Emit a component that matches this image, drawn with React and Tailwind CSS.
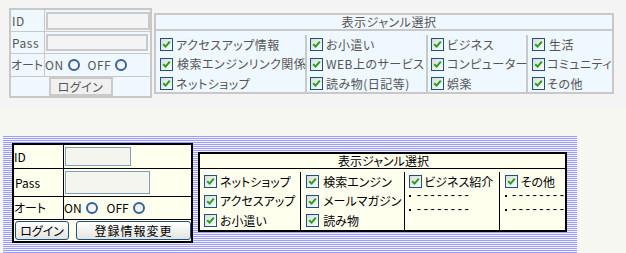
import React from "react";

const Check = () => (
  <span className="inline-flex shrink-0 w-[13px] h-[13px] border border-[#1c5180] bg-linear-to-br from-[#dcdcd6] to-[#fbfbfb] items-center justify-center">
    <svg width="9" height="9" viewBox="0 0 9 9">
      <path d="M1.2 4.2 L3.6 6.6 L7.8 1.6" stroke="#21a121" strokeWidth="2" fill="none" />
    </svg>
  </span>
);

const Radio = () => (
  <span className="inline-block shrink-0 w-[12px] h-[12px] rounded-full border-2 border-[#33639a] bg-linear-to-br from-[#e8e8e4] to-white" />
);

const Item = ({ label, gap = "gap-[3px]" }) => (
  <div className={`flex items-center ${gap} h-[19.5px] whitespace-nowrap`}>
    <Check />
    <span>{label}</span>
  </div>
);

const Dash = () => (
  <div className="flex items-center h-[14px] whitespace-nowrap tracking-normal">
    <span className="w-[2px] h-[2px] bg-black mr-[4px]" />
    <span className="font-['Liberation_Mono',monospace] text-[12px] leading-[14px] tracking-[-0.4px]">--------</span>
  </div>
);

export default function App() {
  return (
    <div className="w-[626px] h-[253px] overflow-hidden bg-[#f7f7f2] font-['Noto_Sans_CJK_JP','Noto_Sans',sans-serif] [font-feature-settings:'palt'] text-[12px] leading-[14px]">
      {/* top section */}
      <div className="h-[108px] bg-[#f4f4f4] flex items-start pl-[9px] pt-[8px] text-[#555] tracking-[0.5px]">
        {/* login table */}
        <div className="w-[143px] h-[90px] border-2 border-[#c8c8c8] bg-[#eff7ff] flex flex-col">
          <div className="h-[22px] flex border-b border-[#c8c8c8]">
            <div className="w-[34px] border-r border-[#c8c8c8] flex items-center pl-[1px] whitespace-nowrap">ID</div>
            <div className="flex-1 flex items-center pl-[1px]">
              <div className="w-[104px] h-[18px] border-2 border-[#cacaca] bg-[#f4f4f4]" />
            </div>
          </div>
          <div className="h-[22px] flex border-b border-[#c8c8c8]">
            <div className="w-[34px] border-r border-[#c8c8c8] flex items-center pl-[1px] whitespace-nowrap">Pass</div>
            <div className="flex-1 flex items-center pl-[1px]">
              <div className="w-[102px] h-[17px] border-2 border-[#cacaca] bg-[#f4f4f4]" />
            </div>
          </div>
          <div className="h-[23px] flex border-b border-[#c8c8c8]">
            <div className="w-[34px] shrink-0 border-r border-[#c8c8c8] flex items-center whitespace-nowrap tracking-normal">オート</div>
            <div className="flex-1 flex items-center gap-[4px] whitespace-nowrap">
              <span>ON</span>
              <Radio />
              <span className="ml-[4px]">OFF</span>
              <Radio />
            </div>
          </div>
          <div className="flex-1 flex items-center justify-center">
            <div className="w-[64px] h-[19px] border-2 border-[#cacaca] bg-[#f0f0f0] flex items-center justify-center whitespace-nowrap">ログイン</div>
          </div>
        </div>

        {/* genre table */}
        <div className="ml-[2px] mt-[5px] w-[460px] h-[81px] border-2 border-[#c8c8c8] bg-[#eff7ff] flex flex-col">
          <div className="h-[16px] border-b-2 border-[#c8c8c8] flex items-center justify-center pl-[10px]">表示ジャンル選択</div>
          <div className="flex-1 flex pt-[4px]">
            <div className="w-[151px] border-r-2 border-[#c8c8c8] pl-[4px] flex flex-col">
              <Item label="アクセスアップ情報" />
              <Item label="検索エンジンリンク関係" gap="gap-[4px]" />
              <Item label="ネットショップ" />
            </div>
            <div className="w-[123px] border-r-2 border-[#c8c8c8] pl-[3px] flex flex-col">
              <Item label="お小遣い" />
              <Item label="WEB上のサービス" />
              <Item label="読み物(日記等)" />
            </div>
            <div className="w-[100px] border-r-2 border-[#c8c8c8] pl-[3px] flex flex-col">
              <Item label="ビジネス" />
              <Item label="コンピューター" />
              <Item label="娯楽" />
            </div>
            <div className="flex-1 pl-[4px] flex flex-col">
              <Item label="生活" gap="gap-[4px]" />
              <Item label="コミュニティ" gap="gap-[2px]" />
              <Item label="その他" gap="gap-[2px]" />
            </div>
          </div>
        </div>
      </div>

      {/* bottom section */}
      <div className="pt-[28px] pl-[3px]">
        <div className="w-[574px] h-[117px] bg-[repeating-linear-gradient(to_bottom,#9d9dff_0px,#9d9dff_1px,#f2f2ff_1px,#f2f2ff_2px)] flex items-start pl-[9px] pt-[7px] text-black">
          {/* login table */}
          <div className="w-[181px] h-[100px] border-2 border-black bg-[#ffffee] flex flex-col">
            <div className="h-[24px] flex border-b border-black">
              <div className="w-[50px] border-r border-black flex items-center whitespace-nowrap">ID</div>
              <div className="flex-1 flex items-center pl-[1px]">
                <div className="w-[66px] h-[19px] border border-[#7f9db9] bg-[#f5f5f0]" />
              </div>
            </div>
            <div className="h-[28px] flex border-b border-black">
              <div className="w-[50px] border-r border-black flex items-center pl-[1px] whitespace-nowrap">Pass</div>
              <div className="flex-1 flex items-center pl-[1px]">
                <div className="w-[85px] h-[23px] border border-[#7f9db9] bg-[#f5f5f0]" />
              </div>
            </div>
            <div className="h-[23px] flex border-b border-black">
              <div className="w-[50px] border-r border-black flex items-center whitespace-nowrap">オート</div>
              <div className="flex-1 flex items-center gap-[4px] whitespace-nowrap">
                <span>ON</span>
                <Radio />
                <span className="ml-[5px]">OFF</span>
                <Radio />
              </div>
            </div>
            <div className="flex-1 flex items-center pl-[1px] gap-[7px]">
              <div className="w-[54px] h-[19px] rounded-[3px] border border-[#1c5180] bg-linear-to-b from-white to-[#e4e4de] flex items-center justify-center whitespace-nowrap">ログイン</div>
              <div className="w-[115px] h-[19px] rounded-[3px] border border-[#1c5180] bg-linear-to-b from-white to-[#e4e4de] flex items-center justify-center whitespace-nowrap tracking-[1px]">登録情報変更</div>
            </div>
          </div>

          {/* genre table */}
          <div className="ml-[5px] mt-[9px] w-[369px] h-[80px] border-2 border-black bg-[#ffffee] flex flex-col">
            <div className="h-[16px] border-b border-black flex items-center justify-center pl-[2px]">表示ジャンル選択</div>
            <div className="flex-1 flex pt-[3px]">
              <div className="w-[102px] border-r border-black pl-[4px] flex flex-col">
                <Item label="ネットショップ" gap="gap-[3px]" />
                <Item label="アクセスアップ" gap="gap-[3px]" />
                <Item label="お小遣い" gap="gap-[3px]" />
              </div>
              <div className="w-[105px] border-r border-black pl-[5px] flex flex-col">
                <Item label="検索エンジン" gap="gap-[4px]" />
                <Item label="メールマガジン" gap="gap-[4px]" />
                <Item label="読み物" gap="gap-[4px]" />
              </div>
              <div className="w-[95px] border-r border-black pl-[4px] flex flex-col">
                <Item label="ビジネス紹介" gap="gap-[2px]" />
                <div className="-mt-[3px]">
                  <Dash />
                  <Dash />
                </div>
              </div>
              <div className="flex-1 pl-[5px] flex flex-col">
                <Item label="その他" gap="gap-[3px]" />
                <div className="-mt-[3px]">
                  <Dash />
                  <Dash />
                </div>
              </div>
            </div>
          </div>
        </div>
      </div>
    </div>
  );
}
